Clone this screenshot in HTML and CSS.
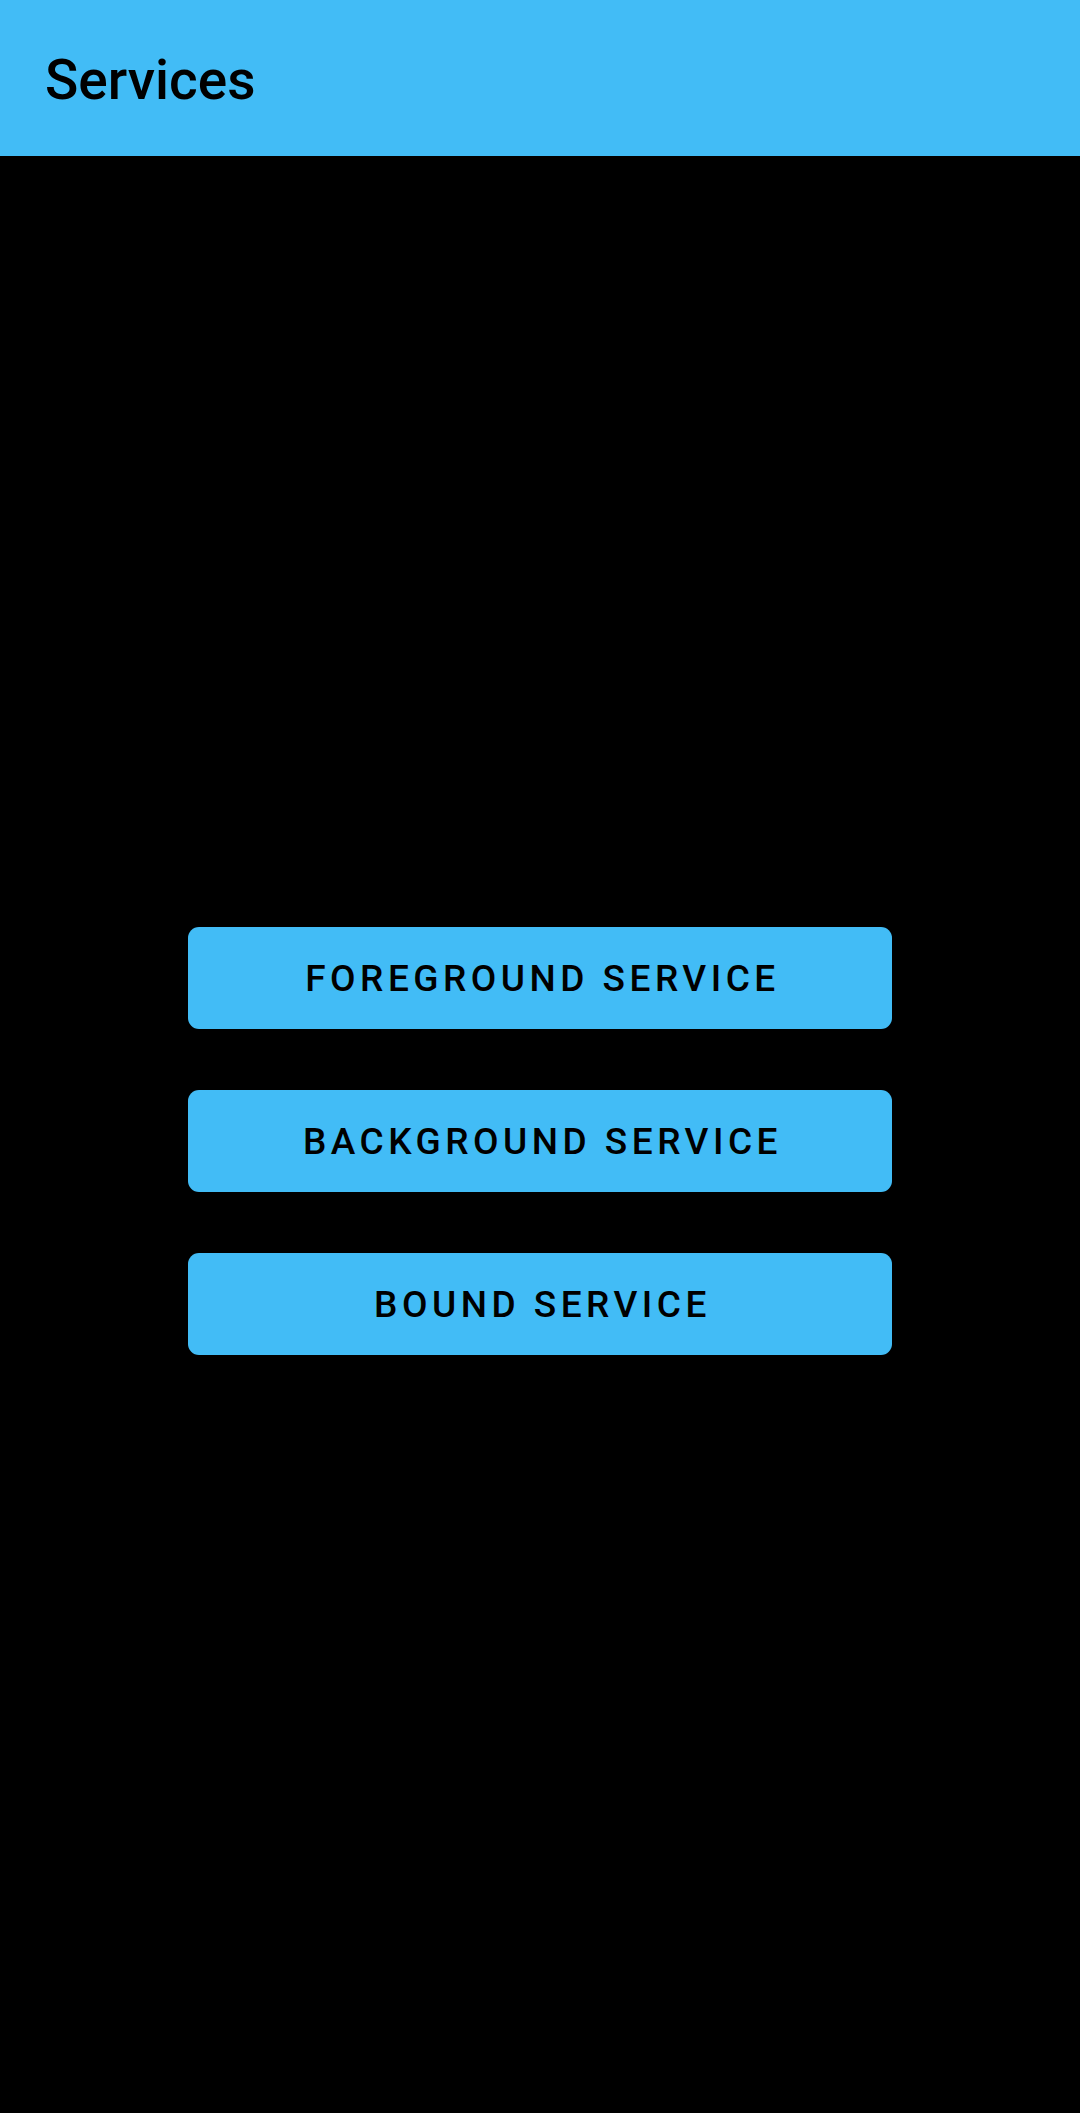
FILE: index.html
```html
<!DOCTYPE html>
<html>
<head>
<meta charset="utf-8">
<link rel="stylesheet" href="styles.css">
</head>
<body>
<header class="appbar"><h1 class="title">Services</h1></header>
<main class="content">
  <button class="btn">FOREGROUND SERVICE</button>
  <button class="btn">BACKGROUND SERVICE</button>
  <button class="btn">BOUND SERVICE</button>
</main>
</body>
</html>
```
FILE: styles.css
```css
html, body {
  margin: 0;
  padding: 0;
  background: #000;
  width: 1080px;
  height: 2113px;
  overflow: hidden;
  font-family: Roboto, "Noto Sans", sans-serif;
}
.appbar {
  height: 156px;
  background: #42bcf6;
  display: flex;
  align-items: center;
  padding-left: 45px;
  box-sizing: border-box;
}
.title {
  margin: 0;
  font-size: 55px;
  font-weight: 500;
  color: #000;
  line-height: 1;
  padding-top: 4px;
}
.content {
  height: 1957px;
  box-sizing: border-box;
  padding-top: 12px;
  display: flex;
  flex-direction: column;
  align-items: center;
  justify-content: center;
  gap: 61px;
}
.btn {
  width: 704px;
  height: 102px;
  border: none;
  border-radius: 11px;
  background: #42bcf6;
  color: #000;
  font-family: Roboto, "Noto Sans", sans-serif;
  font-size: 37px;
  font-weight: 500;
  letter-spacing: 4.5px;
  padding: 2px 0 0 5px;
  margin: 0;
}
```
